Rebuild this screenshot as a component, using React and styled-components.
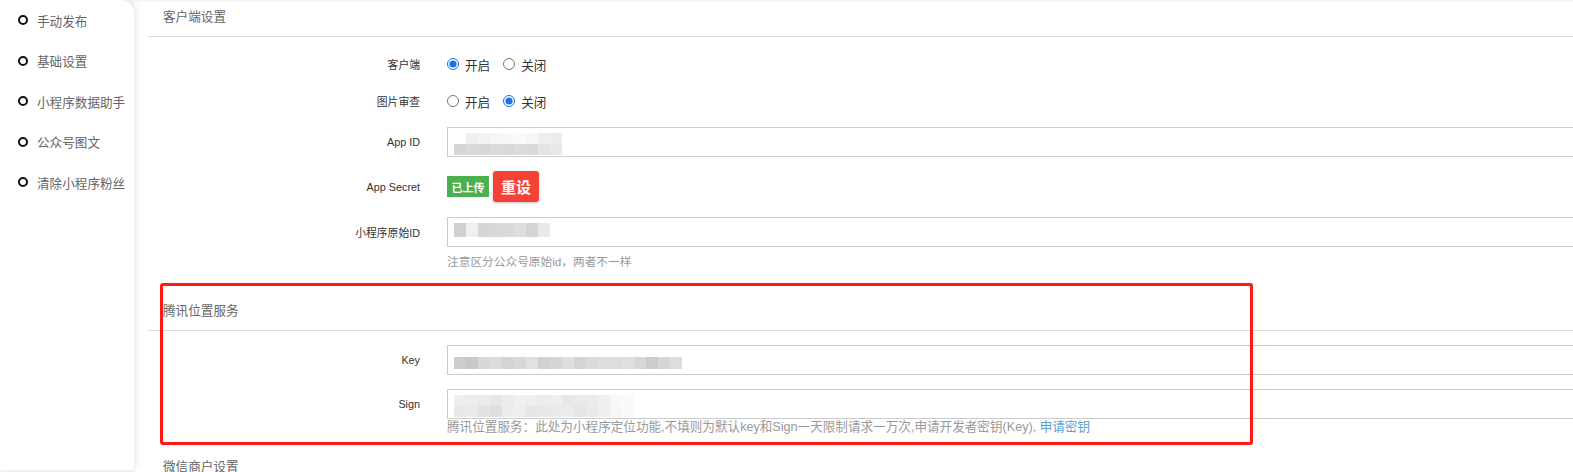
import React from "react";
import styled, { createGlobalStyle } from "styled-components";

const GlobalStyle = createGlobalStyle`
  html, body {
    margin: 0;
    padding: 0;
    background: #f6f6f6;
    overflow: hidden;
    font-family: "Liberation Sans", "Noto Sans CJK SC", sans-serif;
  }
`;

const menu = ["手动发布", "基础设置", "小程序数据助手", "公众号图文", "清除小程序粉丝"];

const appIdPixels = [
  [null, 240, 243, 246, 248, 250, 246, 238, 236],
  [214, 218, 216, 219, 217, 220, 218, 228, 232],
];
const originPixels = [[208, 240, 214, 216, 218, 222, 212, 232]];
const keyPixels = [
  [205, 200, 215, 220, 212, 216, 225, 210, 214, 222, 212, 218, 222, 220, 224, 216, 204, 214, 222],
];
const signPixels = [
  [238, 236, 234, 230, 236, 240, 238, 236, 238, 232, 234, 236, 240, 248, 250],
  [232, 234, 226, 222, 236, 238, 230, 232, 234, 236, 230, 234, 238, 246, 250],
];

function Pixels({ rows, rowHeight }) {
  return (
    <PixelGrid>
      {rows.map((row, i) => (
        <PixelRow key={i}>
          {row.map((g, j) => (
            <Pixel
              key={j}
              $h={rowHeight}
              style={{ background: g == null ? "transparent" : `rgb(${g},${g},${g})` }}
            />
          ))}
        </PixelRow>
      ))}
    </PixelGrid>
  );
}

function Radio({ name, value, checked, label }) {
  return (
    <RadioLabel>
      <RadioInput type="radio" name={name} value={value} defaultChecked={checked} />
      {label}
    </RadioLabel>
  );
}

export default function App() {
  return (
    <>
      <GlobalStyle />
      <Page>
        <Sidebar>
          {menu.map((item) => (
            <MenuItem key={item}>
              <MenuDot />
              {item}
            </MenuItem>
          ))}
        </Sidebar>
        <Main>
          <SectionTitle $top={-2}>客户端设置</SectionTitle>
          <Form $top={15}>
            <Row $h={24}>
              <Label>客户端</Label>
              <Control>
                <Radio name="client" value="on" checked label="开启" />
                <Radio name="client" value="off" label="关闭" />
              </Control>
            </Row>
            <Row $h={24} $top={13}>
              <Label>图片审查</Label>
              <Control>
                <Radio name="img" value="on" label="开启" />
                <Radio name="img" value="off" checked label="关闭" />
              </Control>
            </Row>
            <Row $top={14}>
              <Label>App ID</Label>
              <Control>
                <InputBox $pt={2}>
                  <Pixels rows={appIdPixels} rowHeight={11} />
                </InputBox>
              </Control>
            </Row>
            <Row $h={31} $top={14}>
              <Label>App Secret</Label>
              <Control $gap={4}>
                <Badge>已上传</Badge>
                <ResetButton>重设</ResetButton>
              </Control>
            </Row>
            <Row $top={15}>
              <Label>小程序原始ID</Label>
              <Control>
                <InputBox $pt={5}>
                  <Pixels rows={originPixels} rowHeight={14} />
                </InputBox>
              </Control>
            </Row>
            <Help $size={11.7} $top={7}>注意区分公众号原始id，两者不一样</Help>
          </Form>

          <SectionTitle $top={24}>腾讯位置服务</SectionTitle>
          <Form $top={14}>
            <Row>
              <Label>Key</Label>
              <Control>
                <InputBox $pt={9}>
                  <Pixels rows={keyPixels} rowHeight={12} />
                </InputBox>
              </Control>
            </Row>
            <Row $top={14}>
              <Label>Sign</Label>
              <Control>
                <InputBox $pt={2}>
                  <Pixels rows={signPixels} rowHeight={11} />
                </InputBox>
              </Control>
            </Row>
            <Help $size={12.6} $top={0}>
              腾讯位置服务：此处为小程序定位功能,不填则为默认key和Sign一天限制请求一万次,申请开发者密钥(Key), <HelpLink>申请密钥</HelpLink>
            </Help>
          </Form>

          <SectionTitle $top={15} $plain>微信商户设置</SectionTitle>
        </Main>
        <Highlight />
      </Page>
    </>
  );
}

const Page = styled.div`
  position: relative;
  display: flex;
  align-items: flex-start;
  height: 472px;
  padding-top: 2px;
  box-sizing: border-box;
`;

const Sidebar = styled.nav`
  width: 134px;
  flex-shrink: 0;
  height: 100%;
  background: #fff;
  border-top-right-radius: 12px;
  box-shadow: 3px 0 6px rgba(0, 0, 0, 0.07);
  position: relative;
  z-index: 1;
  margin-top: -2px;
`;

const MenuItem = styled.div`
  display: flex;
  align-items: center;
  height: 40.5px;
  padding-left: 18px;
  font-size: 12.6px;
  color: #666;
  white-space: nowrap;
`;

const MenuDot = styled.span`
  width: 10px;
  height: 10px;
  box-sizing: border-box;
  border: 2px solid #111;
  border-radius: 50%;
  margin-right: 9px;
`;

const Main = styled.main`
  flex: 1;
  align-self: stretch;
  background: #fff;
  padding-left: 14px;
  margin-right: -40px;
`;

const SectionTitle = styled.div`
  height: 36px;
  line-height: 34px;
  margin-top: ${(p) => p.$top || 0}px;
  padding-left: 15px;
  font-size: 12.6px;
  color: #666;
  border-bottom: ${(p) => (p.$plain ? "none" : "1px solid #dcdcdc")};
`;

const Form = styled.div`
  display: flex;
  flex-direction: column;
  padding-top: ${(p) => p.$top || 0}px;
`;

const Row = styled.div`
  display: flex;
  align-items: center;
  height: ${(p) => p.$h || 30}px;
  margin-top: ${(p) => p.$top || 0}px;
`;

const Label = styled.label`
  width: 299px;
  flex-shrink: 0;
  text-align: right;
  padding-right: 27px;
  box-sizing: border-box;
  font-size: 10.8px;
  color: #333;
  white-space: nowrap;
`;

const Control = styled.div`
  flex: 1;
  display: flex;
  align-items: center;
  gap: ${(p) => p.$gap || 0}px;
  height: 100%;
`;

const RadioLabel = styled.label`
  display: inline-flex;
  align-items: center;
  font-size: 12.6px;
  color: #333;
  margin-right: 13px;
`;

const RadioInput = styled.input`
  width: 12px;
  height: 12px;
  margin: 0 6px 0 0;
  accent-color: #1a73e8;
`;

const InputBox = styled.div`
  width: 100%;
  height: 30px;
  box-sizing: border-box;
  border: 1px solid #ccc;
  background: #fff;
  padding: ${(p) => p.$pt || 0}px 0 0 6px;
`;

const PixelGrid = styled.div`
  display: inline-flex;
  flex-direction: column;
  filter: blur(0.6px);
`;

const PixelRow = styled.div`
  display: flex;
`;

const Pixel = styled.span`
  width: 12px;
  height: ${(p) => p.$h}px;
`;

const Badge = styled.span`
  display: inline-flex;
  align-items: center;
  justify-content: center;
  width: 42px;
  height: 21px;
  background: #4caf50;
  color: #fff;
  font-size: 11px;
  font-weight: bold;
`;

const ResetButton = styled.button`
  width: 46px;
  height: 31px;
  border: none;
  border-radius: 3px;
  background: #f44336;
  color: #fff;
  font-family: inherit;
  font-size: 15px;
  font-weight: bold;
  box-shadow: 0 1px 3px rgba(0, 0, 0, 0.25);
  padding: 0;
`;

const Help = styled.div`
  margin-left: 299px;
  margin-top: ${(p) => p.$top}px;
  height: 16px;
  line-height: 16px;
  font-size: ${(p) => p.$size}px;
  color: #999;
  white-space: nowrap;
`;

const HelpLink = styled.a`
  color: #5b9fd0;
  text-decoration: none;
`;

const Highlight = styled.div`
  position: absolute;
  left: 160px;
  top: 283px;
  width: 1093px;
  height: 162px;
  box-sizing: border-box;
  border: 3px solid #ff1a12;
  border-radius: 3px;
  pointer-events: none;
`;
